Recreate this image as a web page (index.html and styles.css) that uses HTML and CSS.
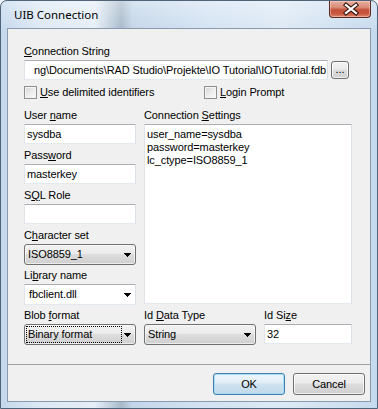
FILE: index.html
```html
<!DOCTYPE html>
<html lang="en">
<head>
  <meta charset="UTF-8" />
  <title>UIB Connection</title>
  <link rel="stylesheet" href="styles.css">
</head>
<body>
  <div class="window">
    <!-- Title bar -->
    <div class="titlebar">
      <span class="title">UIB Connection</span>
      <div class="close">
        <svg width="42" height="16" viewBox="0 0 42 16">
          <path d="M16 4 L26 12 M26 4 L16 12" stroke="#3a1a12" stroke-width="4.4" stroke-linecap="square" fill="none"/>
          <path d="M16 4 L26 12 M26 4 L16 12" stroke="#ffffff" stroke-width="2.2" stroke-linecap="square" fill="none"/>
        </svg>
      </div>
    </div>

    <div class="client">
      <div class="panel">
        <div class="lbl"><u>C</u>onnection String</div>
        <div class="path-row">
          <div class="edit path"><span>ng\Documents\RAD Studio\Projekte\IO Tutorial\IOTutorial.fdb</span></div>
          <div class="ellipsis">...</div>
        </div>

        <div class="checks">
          <div class="check"><span class="box"></span><span><u>U</u>se delimited identifiers</span></div>
          <div class="check"><span class="box"></span><span><u>L</u>ogin Prompt</span></div>
        </div>

        <div class="fields">
          <div class="col-left">
            <div class="field">
              <div class="lbl">User <u>n</u>ame</div>
              <div class="edit">sysdba</div>
            </div>
            <div class="field">
              <div class="lbl">Pass<u>w</u>ord</div>
              <div class="edit">masterkey</div>
            </div>
            <div class="field">
              <div class="lbl">S<u>Q</u>L Role</div>
              <div class="edit"></div>
            </div>
            <div class="field">
              <div class="lbl">C<u>h</u>aracter set</div>
              <div class="combo">
                <span class="combo-text">ISO8859_1</span>
                <svg class="arrow" width="7" height="4" viewBox="0 0 7 4"><path d="M0 0h7L3.5 4z"/></svg>
              </div>
            </div>
            <div class="field">
              <div class="lbl">Li<u>b</u>rary name</div>
              <div class="edit combo-edit">
                <span class="combo-text">fbclient.dll</span>
                <svg class="arrow" width="7" height="4" viewBox="0 0 7 4"><path d="M0 0h7L3.5 4z"/></svg>
              </div>
            </div>
          </div>

          <div class="col-right">
            <div class="lbl">Connection <u>S</u>ettings</div>
            <div class="memo">user_name=sysdba<br>password=masterkey<br>lc_ctype=ISO8859_1</div>
          </div>
        </div>

        <div class="bottom-row">
          <div class="field">
            <div class="lbl">Blob <u>f</u>ormat</div>
            <div class="combo">
              <span class="combo-text focused">Binary format</span>
              <svg class="arrow" width="7" height="4" viewBox="0 0 7 4"><path d="M0 0h7L3.5 4z"/></svg>
            </div>
          </div>
          <div class="field">
            <div class="lbl">Id <u>D</u>ata Type</div>
            <div class="combo">
              <span class="combo-text">String</span>
              <svg class="arrow" width="7" height="4" viewBox="0 0 7 4"><path d="M0 0h7L3.5 4z"/></svg>
            </div>
          </div>
          <div class="field">
            <div class="lbl">Id Si<u>z</u>e</div>
            <div class="edit">32</div>
          </div>
        </div>
      </div>

      <!-- Dialog buttons -->
      <div class="buttons">
        <div class="btn default">OK</div>
        <div class="btn">Cancel</div>
      </div>
    </div>
  </div>
</body>
</html>
```

FILE: styles.css
```css
/* Global */
* {
  box-sizing: border-box;
}
body {
  margin: 0;
  background: #eef2f6;
  color: #000;
  font-family: "Liberation Sans", Arial, sans-serif;
  font-size: 11px;
  letter-spacing: -0.1px;
}
u {
  text-decoration: underline;
  text-underline-offset: 1px;
}

/* Window frame */
.window {
  position: relative;
  width: 378px;
  height: 409px;
  padding: 0 6px 6px 6px;
  border: 1px solid #4f6479;
  border-radius: 7px 7px 0 0;
  display: flex;
  flex-direction: column;
  background:
    linear-gradient(180deg, rgba(255,255,255,0.35), rgba(255,255,255,0) 30px),
    linear-gradient(90deg, #c4d8ec 0%, #dce8f4 10%, #e6eef7 25%, #b9cad9 30%, #a7b9ca 32%, #c3d6e9 35%, #d3e3f3 55%, #dde9f5 75%, #c6daee 100%);
}
.titlebar {
  height: 27px;
  padding: 7px 0 0 7px;
}
.title {
  font-family: "Noto Sans", "Liberation Sans", sans-serif;
  font-size: 11.5px;
  line-height: 14px;
  letter-spacing: 0;
  color: #000;
}
.close {
  position: absolute;
  top: 0;
  right: 6px;
  width: 42px;
  height: 17px;
  border: 1px solid #5b2b22;
  border-top: none;
  border-radius: 0 0 4px 4px;
  background: linear-gradient(180deg, #e8b1a3 0%, #d98b76 40%, #c4523a 55%, #c9583f 80%, #dc8a6f 100%);
  box-shadow: inset 0 0 0 1px rgba(255,220,210,0.45);
}
.close svg {
  display: block;
}

/* Client area */
.client {
  flex: 1;
  border: 1px solid #8a9bad;
  background: #f0f0f0;
  display: flex;
  flex-direction: column;
}
.panel {
  padding: 15px 0 16px 16px;
  border-bottom: 1px solid #a0a0a0;
}
.lbl {
  height: 14px;
  line-height: 14px;
  white-space: nowrap;
}

/* Edits */
.edit {
  height: 20px;
  background: #fff;
  border: 1px solid;
  border-color: #abadb3 #dbdfe6 #e3e9ef #e2e3ea;
  padding: 0 2px;
  display: flex;
  align-items: center;
  white-space: nowrap;
  overflow: hidden;
}
.path-row {
  margin-top: 2px;
  display: flex;
  align-items: center;
  gap: 3px;
}
.path {
  width: 304px;
  flex: none;
  justify-content: flex-end;
  padding-right: 1px;
}
.ellipsis {
  width: 18px;
  height: 18px;
  flex: none;
  border: 1px solid #707070;
  border-radius: 3px;
  background: linear-gradient(180deg, #f2f2f2 0%, #ebebeb 45%, #dddddd 50%, #cfcfcf 100%);
  box-shadow: inset 0 0 0 1px rgba(255,255,255,0.7);
  text-align: center;
  line-height: 15px;
}

/* Checkboxes */
.checks {
  margin-top: 6px;
  height: 13px;
  display: grid;
  grid-template-columns: 180px auto;
}
.check {
  display: flex;
  align-items: center;
  gap: 3px;
  line-height: 13px;
}
.box {
  width: 13px;
  height: 13px;
  border: 1px solid #8f8f8f;
  background: linear-gradient(135deg, #d4d4d4 0%, #ececec 50%, #fbfbfb 100%);
  box-shadow: inset 0 0 0 1px #f4f4f4;
  flex: none;
}

/* Field columns */
.fields {
  margin-top: 9px;
  display: flex;
  gap: 8px;
}
.col-left {
  width: 112px;
}
.col-right {
  width: 208px;
}
.field .lbl,
.col-right .lbl {
  margin-bottom: 2px;
}
.field {
  height: 40px;
}
.memo {
  height: 180px;
  background: #fff;
  border: 1px solid;
  border-color: #abadb3 #dbdfe6 #e3e9ef #e2e3ea;
  padding: 3px 2px;
  line-height: 13px;
}
.bottom-row {
  display: grid;
  grid-template-columns: 112px 112px 88px;
  gap: 8px;
}

/* Combo boxes */
.combo {
  height: 21px;
  border: 1px solid #707070;
  border-radius: 3px;
  background: linear-gradient(180deg, #f2f2f2 0%, #ebebeb 45%, #dddddd 50%, #cfcfcf 100%);
  box-shadow: inset 0 0 0 1px rgba(255,255,255,0.6);
  display: flex;
  align-items: center;
  padding: 0 4px 0 1px;
}
.combo-edit {
  height: 21px;
  padding-right: 4px;
}
.combo-text {
  flex: 1;
  padding: 1px 1px;
  line-height: 13px;
  border: 1px solid transparent;
  margin-right: 2px;
}
.combo-text.focused {
  border: 1px dotted #000;
}
.arrow {
  display: block;
  flex: none;
  shape-rendering: crispEdges;
}

/* Dialog buttons */
.buttons {
  flex: 1;
  display: flex;
  justify-content: flex-end;
  gap: 8px;
  padding: 8px 5px 0 0;
}
.btn {
  width: 72px;
  height: 22px;
  border: 1px solid #707070;
  border-radius: 3px;
  background: linear-gradient(180deg, #f2f2f2 0%, #ebebeb 45%, #dddddd 50%, #cfcfcf 100%);
  box-shadow: inset 0 0 0 1px rgba(255,255,255,0.7);
  text-align: center;
  line-height: 20px;
}
.btn.default {
  border-color: #3c7fb1;
  background: linear-gradient(180deg, #eef6fb 0%, #e1eef6 45%, #cfe3f0 50%, #c0d9ea 100%);
  box-shadow: inset 0 0 0 1px #a9dcf6;
}
```
